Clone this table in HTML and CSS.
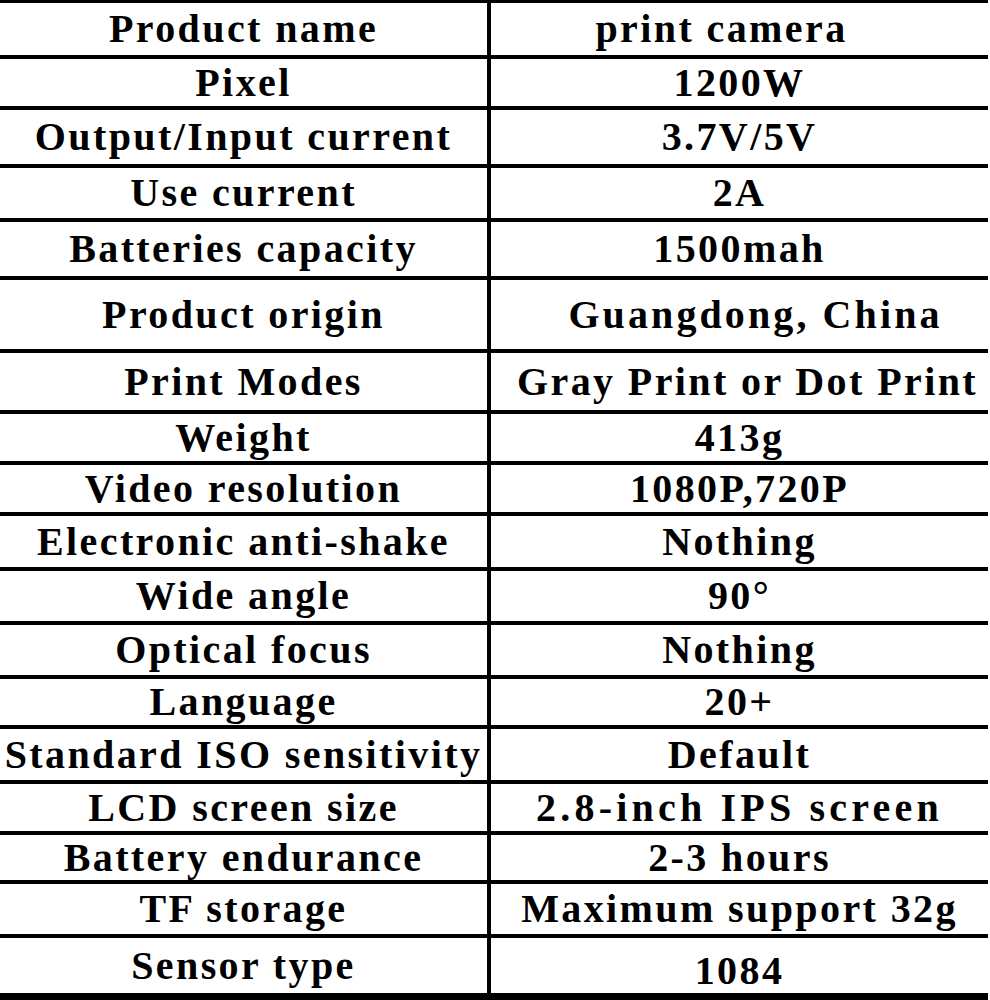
FILE: index.html
```html
<!DOCTYPE html>
<html>
<head>
<meta charset="utf-8">
<link rel="stylesheet" href="styles.css">
</head>
<body>
<div class="spec">
  <div class="row h56"><div class="k">Product name</div><div class="v nudge-left">print camera</div></div>
  <div class="row h51"><div class="k">Pixel</div><div class="v">1200W</div></div>
  <div class="row h58"><div class="k">Output/Input current</div><div class="v">3.7V/5V</div></div>
  <div class="row h54"><div class="k">Use current</div><div class="v">2A</div></div>
  <div class="row h58"><div class="k">Batteries capacity</div><div class="v">1500mah</div></div>
  <div class="row h73"><div class="k">Product origin</div><div class="v nudge-right wide">Guangdong, China</div></div>
  <div class="row h61"><div class="k">Print Modes</div><div class="v nudge-right-sm">Gray Print or Dot Print</div></div>
  <div class="row h51"><div class="k">Weight</div><div class="v">413g</div></div>
  <div class="row h51"><div class="k">Video resolution</div><div class="v">1080P,720P</div></div>
  <div class="row h55"><div class="k">Electronic anti-shake</div><div class="v">Nothing</div></div>
  <div class="row h54"><div class="k">Wide angle</div><div class="v">90°</div></div>
  <div class="row h54"><div class="k">Optical focus</div><div class="v">Nothing</div></div>
  <div class="row h50"><div class="k">Language</div><div class="v">20+</div></div>
  <div class="row h55"><div class="k">Standard ISO sensitivity</div><div class="v">Default</div></div>
  <div class="row h51"><div class="k">LCD screen size</div><div class="v wider">2.8-inch IPS screen</div></div>
  <div class="row h49"><div class="k">Battery endurance</div><div class="v">2-3 hours</div></div>
  <div class="row h54"><div class="k">TF storage</div><div class="v">Maximum support 32g</div></div>
  <div class="row h55 last"><div class="k">Sensor type</div><div class="v lower">1084</div></div>
</div>
</body>
</html>
```

FILE: styles.css
```css
html, body {
  margin: 0;
  padding: 0;
  background: #fff;
}
.spec {
  width: 988px;
  border-top: 3px solid #000;
  border-bottom: 8px solid #000;
  font-family: "Liberation Serif", "Times New Roman", serif;
  font-weight: bold;
  font-size: 40px;
  letter-spacing: 2.4px;
  color: #000;
}
.row {
  display: flex;
  box-sizing: border-box;
  border-bottom: 4px solid #000;
}
.row.last {
  border-bottom: none;
}
.k, .v {
  display: flex;
  align-items: center;
  justify-content: center;
  line-height: 1;
  white-space: nowrap;
  box-sizing: border-box;
}
.k {
  width: 491px;
  border-right: 4px solid #000;
}
.v {
  flex: 1;
}
.nudge-left { padding-right: 36px; }
.nudge-right { padding-left: 32px; }
.nudge-right-sm { padding-left: 16px; }
.wide { letter-spacing: 3.1px; }
.wider { letter-spacing: 4.2px; }
.lower { padding-top: 10px; }
.h49 { height: 49px; }
.h50 { height: 50px; }
.h51 { height: 51px; }
.h54 { height: 54px; }
.h55 { height: 55px; }
.h56 { height: 56px; }
.h58 { height: 58px; }
.h61 { height: 61px; }
.h73 { height: 73px; }
```
